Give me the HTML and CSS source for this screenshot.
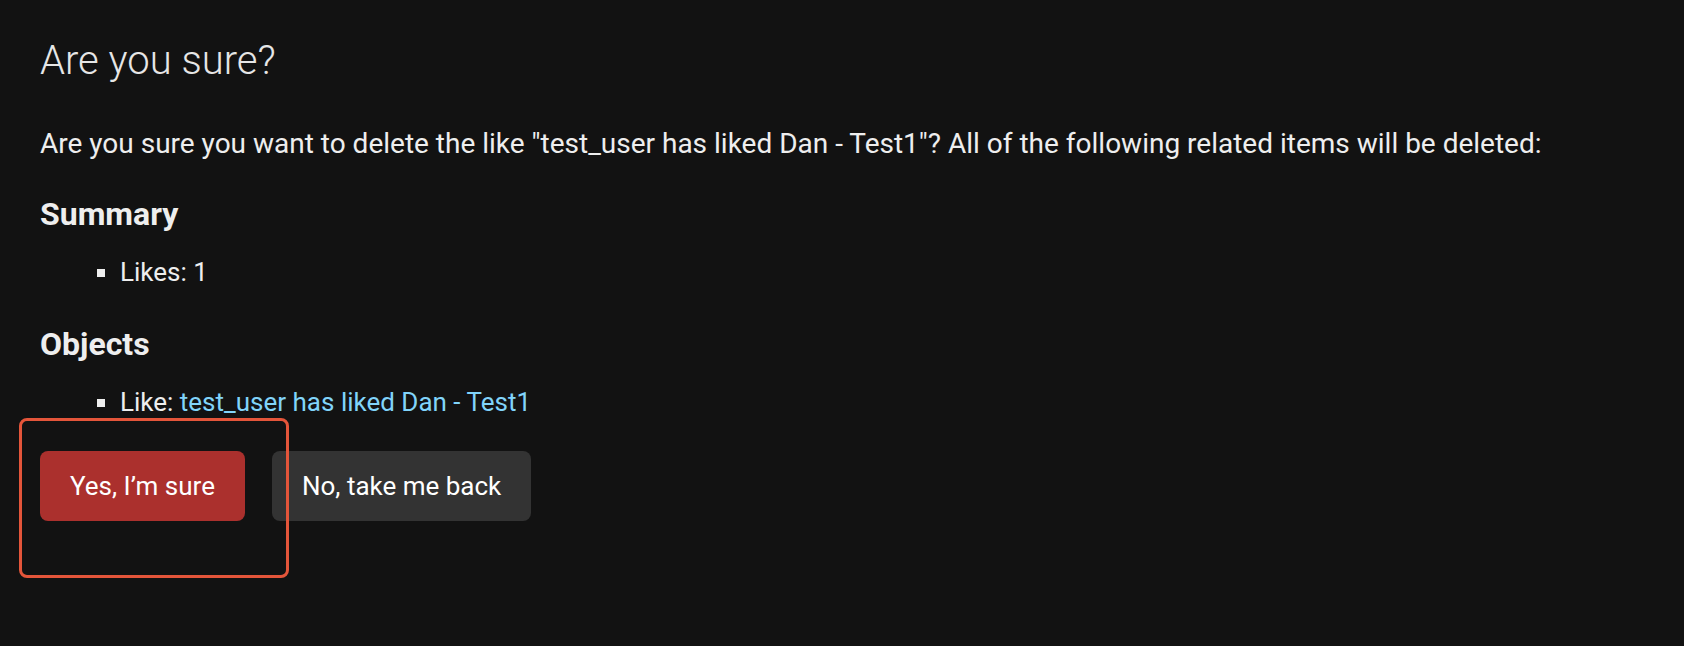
FILE: index.html
```html
<!DOCTYPE html>
<html lang="en">
<head>
<meta charset="utf-8">
<title>Are you sure?</title>
<link rel="stylesheet" href="styles.css">
</head>
<body>
<div class="content">
  <h1 class="title">Are you sure?</h1>
  <p class="intro">Are you sure you want to delete the like "test_user has liked Dan - Test1"? All of the following related items will be deleted:</p>
  <h2 class="section section-first">Summary</h2>
  <ul class="items">
    <li>Likes: 1</li>
  </ul>
  <h2 class="section section-next">Objects</h2>
  <ul class="items">
    <li>Like: <a class="link" href="#">test_user has liked Dan - Test1</a></li>
  </ul>
  <form class="actions">
    <button type="button" class="btn btn-delete">Yes, I’m sure</button>
    <button type="button" class="btn btn-back">No, take me back</button>
  </form>
</div>
<div class="highlight"></div>
</body>
</html>
```

FILE: styles.css
```css
html, body {
  margin: 0;
  padding: 0;
  background: #121212;
}
body {
  width: 1684px;
  height: 646px;
  overflow: hidden;
  position: relative;
  font-family: Roboto, "Liberation Sans", sans-serif;
  color: #eeeeee;
}
.content {
  padding: 37px 40px 0 40px;
}
.title {
  margin: 0;
  font-size: 40px;
  line-height: 48px;
  font-weight: 300;
  color: #e6e6e6;
}
.intro {
  margin: 39px 0 0 0;
  font-size: 28px;
  line-height: 40px;
}
.section {
  margin: 0;
  font-size: 32px;
  line-height: 40px;
  font-weight: 700;
}
.section-first {
  margin-top: 30px;
}
.section-next {
  margin-top: 32px;
}
.items {
  margin: 18px 0 0 0;
  padding: 0 0 0 80px;
  font-size: 26px;
  line-height: 40px;
  list-style-type: square;
}
.link {
  color: #81d4fa;
  text-decoration: none;
}
.actions {
  margin: 29px 0 0 0;
  display: flex;
  gap: 27px;
}
.btn {
  height: 70px;
  padding: 0 30px;
  border: none;
  border-radius: 8px;
  font-family: Roboto, "Liberation Sans", sans-serif;
  font-size: 26px;
  color: #ffffff;
}
.btn-delete {
  background: #ab302d;
}
.btn-back {
  background: #333333;
}
.highlight {
  position: absolute;
  left: 19px;
  top: 418px;
  width: 264px;
  height: 154px;
  border: 3px solid #e4553a;
  border-radius: 8px;
}
```
